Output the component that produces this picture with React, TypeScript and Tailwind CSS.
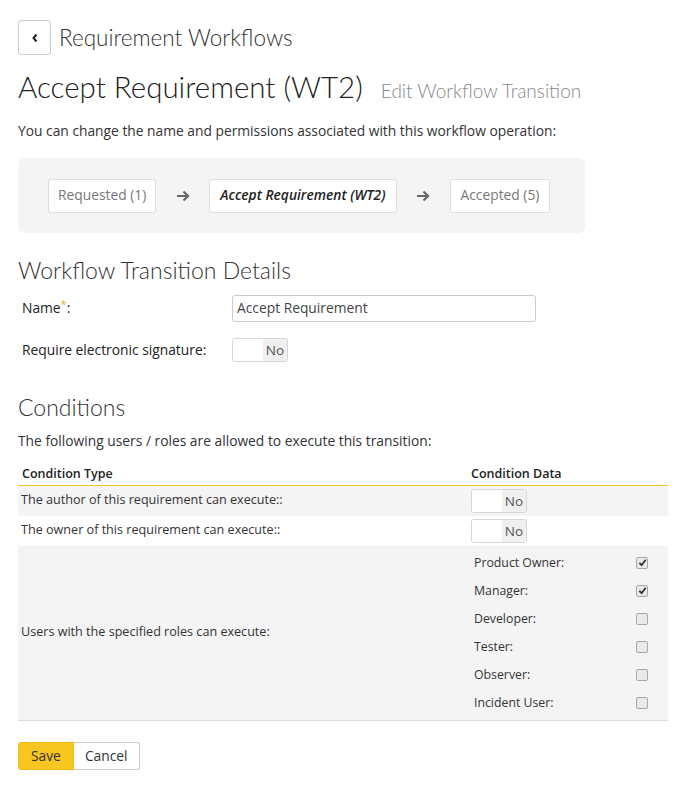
import React from "react";

const body = { fontFamily: '"Open Sans", "Liberation Sans", sans-serif' };
const head = { fontFamily: 'Lato, "Open Sans", sans-serif' };

function Toggle() {
  return (
    <div className="flex h-[24px] w-[56px] rounded-[3px] border border-[#d6d6d6] bg-white overflow-hidden">
      <div className="w-[30px] bg-white" />
      <div className="flex-1 bg-[#f0f0f0] flex items-center justify-center text-[13.5px] text-[#555]">No</div>
    </div>
  );
}

function Check({ on }: { on: boolean }) {
  return (
    <div className="w-[12px] h-[12px] rounded-[2px] border border-[#a8a8a8] bg-[#e9e9e9] flex items-center justify-center">
      {on && (
        <svg width="9" height="9" viewBox="0 0 10 10">
          <path d="M1.5 5.5 L4 8 L8.5 2" fill="none" stroke="#333" strokeWidth="2" />
        </svg>
      )}
    </div>
  );
}

export default function App() {
  const roles: [string, boolean][] = [
    ["Product Owner:", true],
    ["Manager:", true],
    ["Developer:", false],
    ["Tester:", false],
    ["Observer:", false],
    ["Incident User:", false],
  ];
  return (
    <div className="w-[688px] h-[785px] bg-white text-[#333] px-[18px] pt-[20px] text-[13.8px]" style={body}>
      <div className="flex items-center gap-[8px]">
        <div className="w-[33px] h-[35px] rounded-[3px] border border-[#ccc] flex items-center justify-center">
          <svg width="8" height="10" viewBox="0 0 8 10">
            <path d="M5.5 1.5 L2.5 5 L5.5 8.5" fill="none" stroke="#222" strokeWidth="2" />
          </svg>
        </div>
        <div className="text-[22.5px] font-light text-[#333]" style={head}>Requirement Workflows</div>
      </div>
      <div className="flex items-baseline gap-[18px] mt-[14px]">
        <div className="text-[29.5px] font-light text-[#222] leading-[36px]" style={head}>Accept Requirement (WT2)</div>
        <div className="text-[19px] font-light text-[#888]" style={head}>Edit Workflow Transition</div>
      </div>
      <p className="mt-[15px] text-[#333]">You can change the name and permissions associated with this workflow operation:</p>

      <div className="mt-[17px] w-[567px] h-[75px] rounded-[6px] bg-[#f4f4f4] flex items-center pl-[30px]">
        <div className="h-[34px] px-[9px] flex items-center bg-white border border-[#ddd] rounded-[3px] text-[#777]">Requested (1)</div>
        <div className="w-[53px] flex justify-center">
          <svg width="14" height="12" viewBox="0 0 14 12">
            <path d="M1 6 H12 M7.5 1.5 L12 6 L7.5 10.5" fill="none" stroke="#666" strokeWidth="2.2" />
          </svg>
        </div>
        <div className="h-[34px] px-[10px] flex items-center bg-white border border-[#ddd] rounded-[3px] italic font-semibold text-[#222]">Accept Requirement (WT2)</div>
        <div className="w-[53px] flex justify-center">
          <svg width="14" height="12" viewBox="0 0 14 12">
            <path d="M1 6 H12 M7.5 1.5 L12 6 L7.5 10.5" fill="none" stroke="#666" strokeWidth="2.2" />
          </svg>
        </div>
        <div className="h-[34px] px-[10px] flex items-center bg-white border border-[#ddd] rounded-[3px] text-[#777]">Accepted (5)</div>
      </div>

      <div className="text-[23px] font-light text-[#333] mt-[22px] leading-[30px]" style={head}>Workflow Transition Details</div>
      <div className="flex items-center mt-[10px]">
        <div className="w-[214px] pl-[4px] text-[#222]">
          Name<span className="text-[#f5a623] align-top text-[11px] leading-none">*</span>:
        </div>
        <div className="w-[304px] h-[27px] border border-[#ccc] rounded-[3px] flex items-center px-[4px] text-[#444]">Accept Requirement</div>
      </div>
      <div className="flex items-center mt-[16px]">
        <div className="w-[214px] pl-[4px] text-[#222]">Require electronic signature:</div>
        <Toggle />
      </div>

      <div className="text-[23px] font-light text-[#333] mt-[30px] leading-[30px]" style={head}>Conditions</div>
      <p className="mt-[9px] text-[#333]">The following users / roles are allowed to execute this transition:</p>

      <div className="w-[650px] mt-[11px] text-[12.6px]">
        <div className="flex h-[23px] items-end pb-[1px] border-b border-[#f7c61d] font-semibold text-[#222] text-[12.5px]">
          <div className="w-[453px] pl-[4px]">Condition Type</div>
          <div>Condition Data</div>
        </div>
        <div className="flex h-[30px] items-center bg-[#f4f4f4]">
          <div className="w-[453px] pl-[3px]">The author of this requirement can execute::</div>
          <Toggle />
        </div>
        <div className="flex h-[30px] items-center bg-white">
          <div className="w-[453px] pl-[3px]">The owner of this requirement can execute::</div>
          <Toggle />
        </div>
        <div className="flex items-center bg-[#f4f4f4] border-b border-[#ddd] py-[3px]">
          <div className="w-[453px] pl-[3px]">Users with the specified roles can execute:</div>
          <div className="flex flex-col">
            {roles.map(([r, on]) => (
              <div key={r} className="flex items-center h-[28px] w-[177px]">
                <div className="w-[165px] pl-[3px] text-[12.3px]">{r}</div>
                <Check on={on} />
              </div>
            ))}
          </div>
        </div>
      </div>

      <div className="flex mt-[21px]">
        <div className="h-[28px] px-[12px] flex items-center bg-[#f8c620] border border-[#f0bd14] rounded-l-[3px] text-[#333]">Save</div>
        <div className="h-[28px] px-[11px] flex items-center bg-white border border-[#ccc] border-l-0 rounded-r-[3px] text-[#333]">Cancel</div>
      </div>
    </div>
  );
}
